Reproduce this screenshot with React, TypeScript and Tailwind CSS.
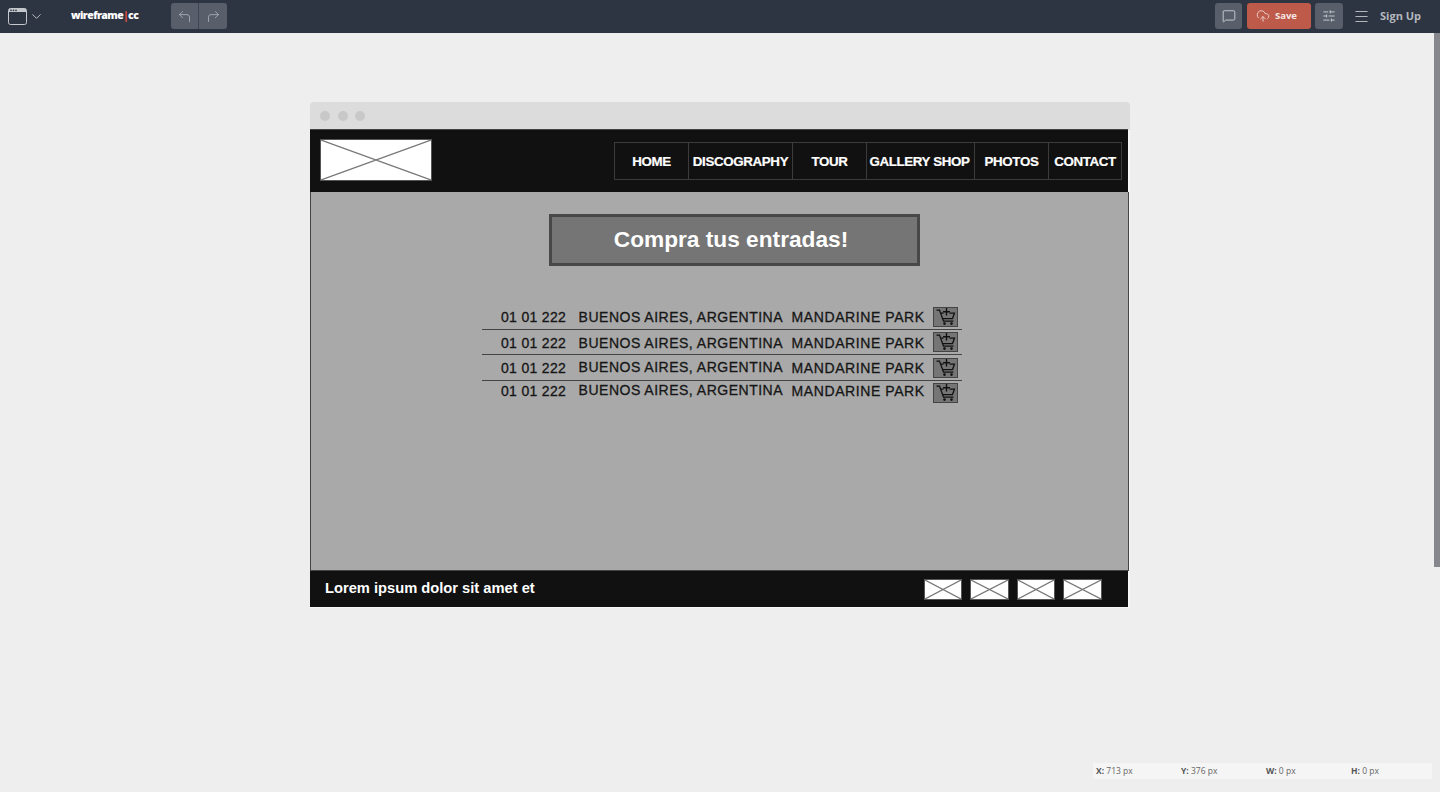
import React from 'react';
import { ChevronDown, CloudUpload, CornerUpLeft, CornerUpRight, Menu, MessageSquare, SlidersHorizontal } from 'lucide-react';

const navItems = [
  { label: 'HOME', w: 'w-[73px]' },
  { label: 'DISCOGRAPHY', w: 'w-[104px]' },
  { label: 'TOUR', w: 'w-[74px]' },
  { label: 'GALLERY SHOP', w: 'w-[108px] pr-[2px]' },
  { label: 'PHOTOS', w: 'w-[74px]' },
  { label: 'CONTACT', w: 'w-[73px]' },
];

const rows = [
  { date: 'top-[308px]', city: 'top-[308px]', park: 'top-[308px]', cart: 'top-[307px]' },
  { date: 'top-[334px]', city: 'top-[334px]', park: 'top-[334px]', cart: 'top-[332px]' },
  { date: 'top-[359px]', city: 'top-[358px]', park: 'top-[359px]', cart: 'top-[358px]' },
  { date: 'top-[382px]', city: 'top-[381px]', park: 'top-[382px]', cart: 'top-[383px]' },
];

const dividers = ['top-[329px]', 'top-[354px]', 'top-[380px]'];

function Placeholder({ className }: { className: string }) {
  return (
    <div className={`absolute bg-white border border-[#555] ${className}`}>
      <svg className="w-full h-full block" viewBox="0 0 100 100" preserveAspectRatio="none">
        <path d="M0 0L100 100M100 0L0 100" stroke="#777" strokeWidth="1.2" vectorEffect="non-scaling-stroke" fill="none" />
      </svg>
    </div>
  );
}

function WindowIcon() {
  return (
    <svg className="ml-2 block" width="19" height="17" viewBox="0 0 19 17" fill="none">
      <rect x="0.5" y="0.5" width="18" height="16" rx="2" stroke="#c4c7cc" />
      <path d="M1 1.5a1 1 0 0 1 1-1h15a1 1 0 0 1 1 1V4H1z" fill="#c4c7cc" />
      <circle cx="3" cy="2.4" r="0.8" fill="#2d3442" />
      <circle cx="5.5" cy="2.4" r="0.8" fill="#2d3442" />
      <circle cx="8" cy="2.4" r="0.8" fill="#2d3442" />
    </svg>
  );
}

function CartPlus() {
  return (
    <svg className="block" width="23" height="18" viewBox="0 0 23 18" fill="none" stroke="#111" strokeWidth="1.25">
      <path d="M2.5 2H5.5L9.5 13H19.5" />
      <path d="M7 5H9.5M15.5 5H20.5L18.5 10.5H8.5" />
      <path d="M12.5 0V7.5M9 3.7H16" strokeWidth="1.4" />
      <circle cx="10.5" cy="15.6" r="1.3" fill="#111" stroke="none" />
      <circle cx="17.5" cy="15.6" r="1.3" fill="#111" stroke="none" />
    </svg>
  );
}

function TopBar() {
  return (
    <div className="h-[33px] pb-[1px] bg-[#2d3442] flex items-center justify-between text-white font-['Open_Sans',sans-serif] shrink-0">
      <div className="flex items-center">
        <WindowIcon />
        <ChevronDown className="ml-[2px] w-[15px] h-[15px] text-[#c4c7cc]" strokeWidth={1.5} />
        <div className="ml-[27px] w-[100px] text-[10.5px] font-extrabold tracking-[-0.55px]">
          wireframe<span className="text-[#d9503f]">|</span>cc
        </div>
        <div className="flex h-[26px] rounded-[3px] bg-[#585e6a]">
          <div className="w-[28px] flex items-center justify-center border-r border-[#3f4653]">
            <CornerUpLeft className="w-[15px] h-[15px] text-[#a4a8af]" strokeWidth={1.5} />
          </div>
          <div className="w-[28px] flex items-center justify-center">
            <CornerUpRight className="w-[15px] h-[15px] text-[#a4a8af]" strokeWidth={1.5} />
          </div>
        </div>
      </div>
      <div className="flex items-center">
        <div className="w-[27px] h-[26px] rounded-[3px] bg-[#585e6a] flex items-center justify-center">
          <MessageSquare className="w-[14px] h-[14px] text-[#d5d7da]" strokeWidth={1.5} />
        </div>
        <div className="ml-[5px] w-[64px] h-[26px] rounded-[3px] bg-[#bd5a49] flex items-center pl-[9px] gap-[5px]">
          <CloudUpload className="w-[14px] h-[14px] text-[#eed9d5]" strokeWidth={1.5} />
          <span className="text-[9.5px] font-bold text-[#f5e6e3]">Save</span>
        </div>
        <div className="ml-[4px] w-[28px] h-[26px] rounded-[3px] bg-[#585e6a] flex items-center justify-center">
          <SlidersHorizontal className="w-[14px] h-[14px] text-[#d5d7da]" strokeWidth={1.5} />
        </div>
        <Menu className="ml-[10px] w-[17px] h-[17px] text-[#b4b7bc]" strokeWidth={1.5} />
        <span className="ml-[10px] mr-[19px] text-[11px] font-bold text-[#b4b7bc]">Sign Up</span>
      </div>
    </div>
  );
}

function Mockup() {
  return (
    <div className="relative flex-1 overflow-hidden font-['Liberation_Sans',sans-serif]">
      {/* canvas coords are page coords, so shift everything up by the bar height */}
      <div className="absolute left-0 -top-[33px] w-[1440px] h-[792px]">
        {/* browser chrome */}
        <div className="absolute left-[310px] top-[102px] w-[820px] h-[28px] bg-[#dcdcdc] rounded-t-[4px] flex items-center pl-[10px] gap-[7.5px]">
          <span className="w-[10px] h-[10px] rounded-full bg-[#c8c8c8]" />
          <span className="w-[10px] h-[10px] rounded-full bg-[#c8c8c8]" />
          <span className="w-[10px] h-[10px] rounded-full bg-[#c8c8c8]" />
        </div>
        <div className="absolute left-[1128px] top-[130px] w-[2px] h-[478px] bg-[#f7f7f7]" />
        <div className="absolute left-[310px] top-[607px] w-[820px] h-px bg-[#f7f7f7]" />

        {/* header */}
        <div className="absolute left-[310px] top-[129px] w-[818px] h-[64px] bg-[#111] border-t border-b border-[#444]" />
        <Placeholder className="left-[320px] top-[139px] w-[112px] h-[42px]" />
        <div className="absolute left-[614px] top-[142px] h-[38px] flex border border-[#3c3c3c] bg-[#111]">
          {navItems.map((item, i) => (
            <div
              key={item.label}
              className={`${item.w} h-full pt-[1px] flex items-center justify-center text-[13.33px] font-bold text-white tracking-[-0.35px] whitespace-nowrap [-webkit-text-stroke:0.2px_#fff] ${i > 0 ? 'border-l border-[#3c3c3c]' : ''}`}
            >
              {item.label}
            </div>
          ))}
        </div>

        {/* main area */}
        <div className="absolute left-[310px] top-[192px] w-[819px] h-[379px] bg-[#a9a9a9] border border-[#444] border-t-0" />
        <div className="absolute left-[549px] top-[214px] w-[371px] h-[52px] pr-[7px] pb-[2px] bg-[#757575] border-[3px] border-[#484848] flex items-center justify-center text-[22.7px] font-bold text-white">
          Compra tus entradas!
        </div>

        {rows.map((row, i) => (
          <React.Fragment key={i}>
            <div className={`absolute left-[501px] ${row.date} text-[14px] leading-[18px] text-[#161616] tracking-[0.32px] whitespace-nowrap [-webkit-text-stroke:0.3px_#161616]`}>
              01 01 222
            </div>
            <div className={`absolute left-[578.6px] ${row.city} text-[14px] leading-[18px] text-[#161616] tracking-[0.5px] whitespace-nowrap [-webkit-text-stroke:0.3px_#161616]`}>
              BUENOS AIRES, ARGENTINA
            </div>
            <div className={`absolute left-[791.6px] ${row.park} text-[14px] leading-[18px] text-[#161616] tracking-[0.58px] whitespace-nowrap [-webkit-text-stroke:0.3px_#161616]`}>
              MANDARINE PARK
            </div>
            <div className={`absolute left-[933px] ${row.cart} w-[25px] h-[20px] bg-[#757575] border border-[#444] flex items-center justify-center`}>
              <CartPlus />
            </div>
          </React.Fragment>
        ))}
        {dividers.map((top) => (
          <div key={top} className={`absolute left-[482px] ${top} w-[480px] h-px bg-[#444]`} />
        ))}

        {/* footer */}
        <div className="absolute left-[310px] top-[570px] w-[818px] h-[37px] pb-[1px] bg-[#111] border-t border-[#444] flex items-center pl-[15px] text-[14.7px] font-bold text-white">
          Lorem ipsum dolor sit amet et
        </div>
        <Placeholder className="left-[924px] top-[579px] w-[38px] h-[21px]" />
        <Placeholder className="left-[970px] top-[579px] w-[39px] h-[21px]" />
        <Placeholder className="left-[1017px] top-[579px] w-[38px] h-[21px]" />
        <Placeholder className="left-[1063px] top-[579px] w-[39px] h-[21px]" />

        {/* status readout */}
        <div className="absolute left-[1093px] top-[763px] w-[339px] h-[16px] bg-[#f5f5f5] flex items-center text-[8.5px] text-[#666] font-['Open_Sans',sans-serif]">
          <span className="w-[85px] pl-[3px]"><b className="text-[#555]">X:</b> 713 px</span>
          <span className="w-[85px] pl-[3px]"><b className="text-[#555]">Y:</b> 376 px</span>
          <span className="w-[85px] pl-[3px]"><b className="text-[#555]">W:</b> 0 px</span>
          <span className="w-[84px] pl-[3px]"><b className="text-[#555]">H:</b> 0 px</span>
        </div>

        {/* scrollbar */}
        <div className="absolute left-[1434px] top-[33px] w-[6px] h-[534px] bg-[#85878c]" />
      </div>
    </div>
  );
}

export default function App() {
  return (
    <div className="w-[1440px] h-[792px] flex flex-col bg-[#eeeeee] overflow-hidden">
      <TopBar />
      <Mockup />
    </div>
  );
}
